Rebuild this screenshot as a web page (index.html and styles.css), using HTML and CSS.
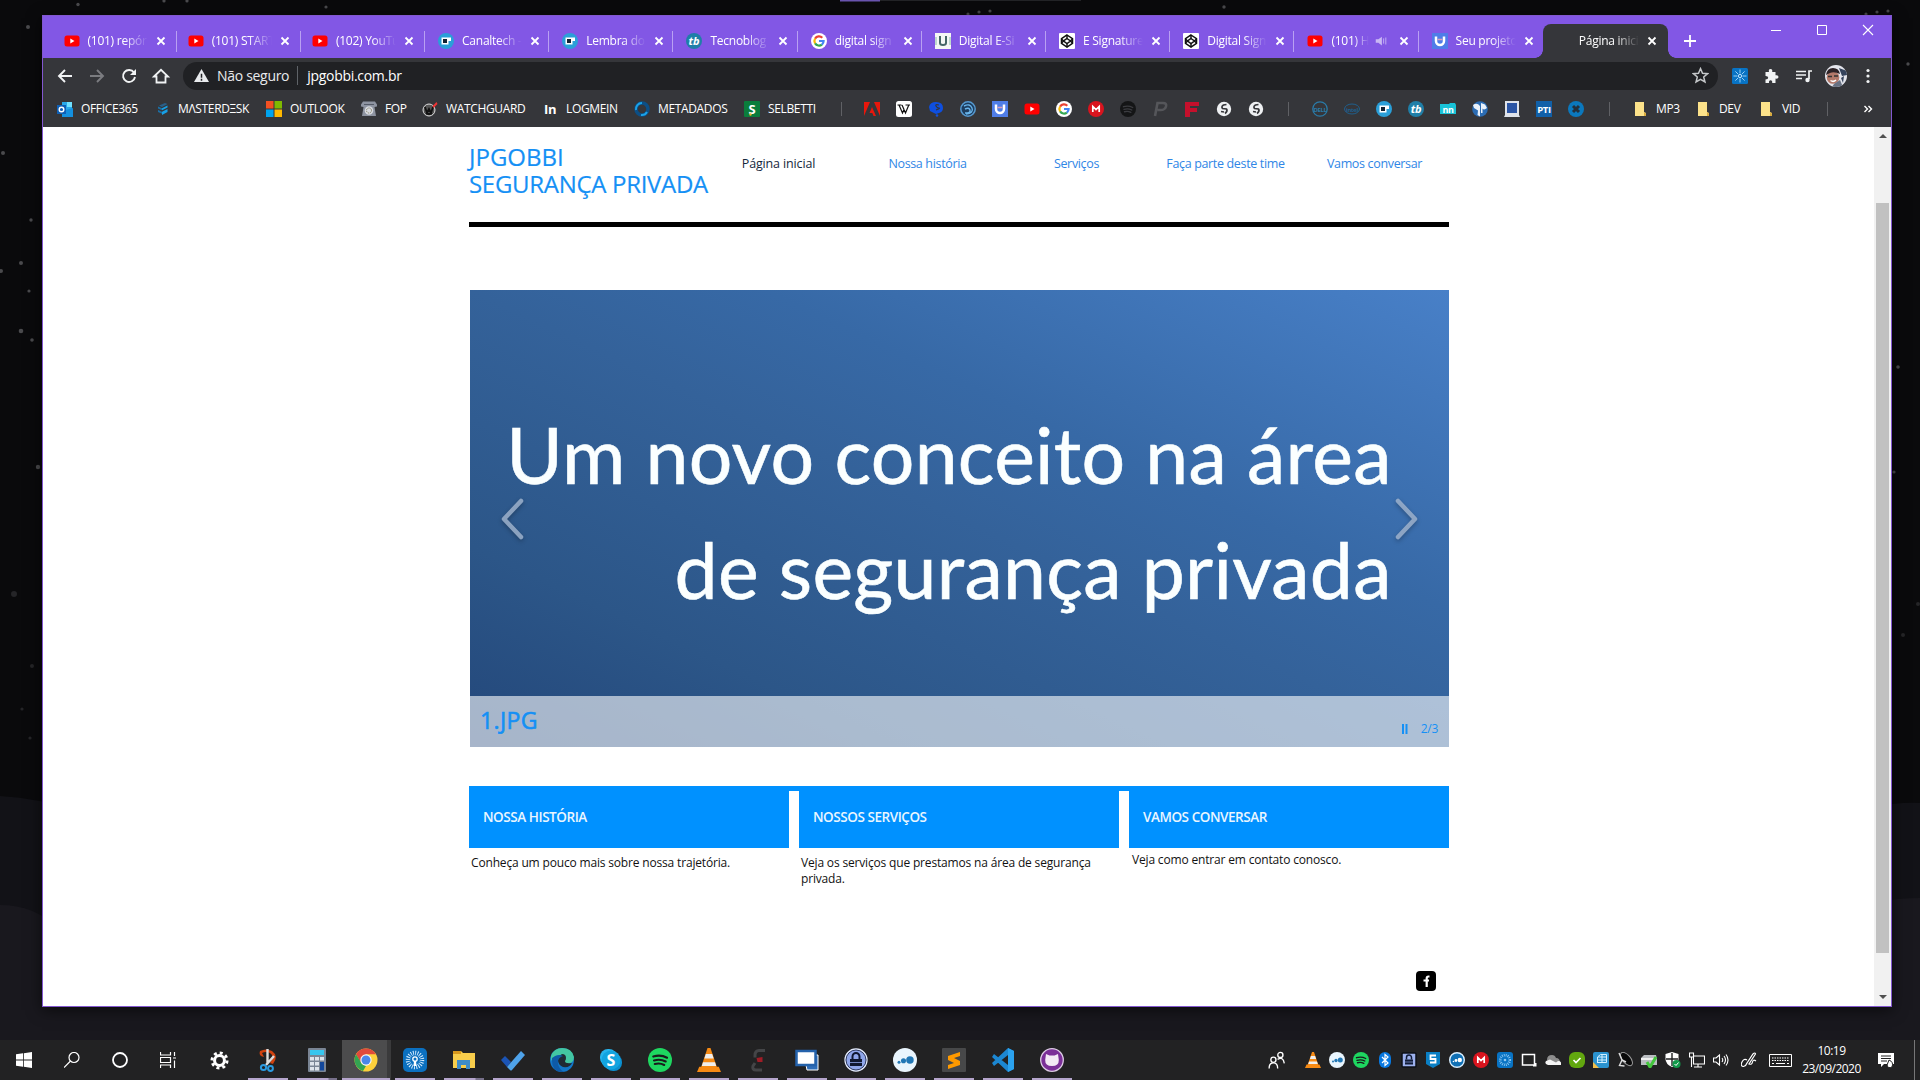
FILE: index.html
```html
<!DOCTYPE html>
<html lang="pt-BR">
<head>
<meta charset="utf-8">
<title>Página inicial</title>
<link rel="stylesheet" href="styles.css">
</head>
<body>
<svg width="0" height="0" class="defs">
  <symbol id="yt" viewBox="0 0 16 16"><rect x="0.5" y="2.5" width="15" height="11" rx="2.5" fill="#f00"/><path d="M6.3 5.5v5l4.2-2.5z" fill="#fff"/></symbol>
  <symbol id="ct" viewBox="0 0 16 16"><circle cx="8" cy="8" r="8" fill="#2a9fd8"/><path d="M3.500 4.500h9.500v3.500h-2.500v3.500h-7z" fill="#fff"/><path d="M5 6h4v4H5z" fill="#123"/></symbol>
  <symbol id="tb" viewBox="0 0 16 16"><circle cx="8" cy="8" r="8" fill="#1f7fa8"/><text x="8" y="12" text-anchor="middle" class="glyph" font-style="italic" font-size="11">tb</text></symbol>
  <symbol id="goog" viewBox="0 0 16 16"><circle cx="8" cy="8" r="8" fill="#fff"/><g fill="none" stroke-width="2.2"><path d="M11.3 4.7A4.6 4.6 0 0 0 4.1 5.6" stroke="#ea4335"/><path d="M4.1 5.6a4.6 4.6 0 0 0 0 4.8" stroke="#fbbc05"/><path d="M4.1 10.4a4.6 4.6 0 0 0 6.8 1.2" stroke="#34a853"/><path d="M10.9 11.6A4.6 4.6 0 0 0 12.6 8H8" stroke="#4285f4"/></g></symbol>
  <symbol id="ui" viewBox="0 0 16 16"><rect width="16" height="16" fill="#f4f7f4"/><path d="M5 3v7q0 2 3 2t3-2V3" fill="none" stroke="#466" stroke-width="2"/><path d="M1 4v8M15 4v8" stroke="#8ba" stroke-width="1"/></symbol>
  <symbol id="cp" viewBox="0 0 16 16"><rect width="16" height="16" rx="1" fill="#fff"/><g fill="none" stroke="#111" stroke-width="1.5"><path d="M8 2l5.5 3.7v4.6L8 14l-5.5-3.7V5.7z"/><path d="M8 5.5L11.5 8 8 10.5 4.5 8zM8 2v3.5M8 10.5V14M2.5 6l2 2-2 2M13.5 6l-2 2 2 2"/></g></symbol>
  <symbol id="uu" viewBox="0 0 16 16"><rect width="16" height="16" fill="#4f7de8"/><path d="M4 3.500v4.500a4 4 0 0 0 8 0V3.500" fill="none" stroke="#fff" stroke-width="2.500"/><path d="M5.500 6.500h5" stroke="#d9a0c0" stroke-width="1.500"/></symbol>
  <symbol id="x" viewBox="0 0 16 16"><path d="M4.500 4.500l7 7M11.500 4.500l-7 7" stroke="#fff" stroke-width="1.800"/></symbol>
  <symbol id="spot" viewBox="0 0 16 16"><circle cx="8" cy="8" r="8" fill="currentColor"/><path class="waves" d="M3.500 5.700q5-1.500 9.200.8M4 8.300q4.300-1.200 7.800.7M4.500 10.700q3.500-.9 6.300.6"/></symbol>
  <symbol id="mega" viewBox="0 0 16 16"><circle cx="8" cy="8" r="8" fill="#d9141e"/><path d="M4.800 11V5.500L8 8.600l3.200-3.100V11" fill="none" stroke="#fff" stroke-width="1.700"/></symbol>
  <symbol id="globe" viewBox="0 0 16 16"><circle cx="8" cy="8" r="7.200" fill="#eef0f2"/><path d="M10.500 3.500L7.500 4Q5 5.500 6.500 7.500l4 .5q1.500 2-1.500 4.500M5 10.500l3 .5" stroke="#35363a" stroke-width="1.700" fill="none"/></symbol>
  <symbol id="folder" viewBox="0 0 16 16"><path d="M3 1h9v10l2 1v3H3z" fill="#fce28a"/><path d="M12 11l2 1.500V15h-2z" fill="#d9ab3e"/></symbol>
  <symbol id="vlc" viewBox="0 0 16 16"><path d="M7 0h2l5 15H2z" fill="#f68a14"/><path d="M5.900 4h4.200l1 3H4.900zM4 9.500h8l.8 2.500H3.200z" fill="#eee"/><path d="M1.500 12.500h13L16 16H0z" fill="#f68a14"/></symbol>
  <symbol id="dots" viewBox="0 0 16 16"><circle cx="8" cy="8" r="8" fill="#e9f5fd"/><circle cx="4" cy="9.500" r="1" fill="#2177b5"/><circle cx="7" cy="8.500" r="1.700" fill="#2177b5"/><circle cx="11.300" cy="8" r="2.500" fill="#2177b5"/></symbol>
  <symbol id="rays" viewBox="0 0 16 16"><rect width="16" height="16" rx="1.500" fill="#0873c4"/><path d="M8 1.500v4M8 10.500v4M1.500 8h4M10.500 8h4M3.400 3.400l2.800 2.800M9.800 9.800l2.800 2.800M12.600 3.400L9.800 6.200M6.200 9.800l-2.800 2.800" stroke="#a9dbff" stroke-width=".9"/><circle cx="8" cy="8" r="1.600" fill="none" stroke="#bfe4ff"/></symbol>
</svg>

<div class="desktop">
  <svg class="wallpaper" viewBox="0 0 1920 1040">
    <path d="M0 796Q80 800 140 850V1040H0zM1780 860Q1840 800 1920 803V1040H1780z" fill="#121217"/>
    <path d="M0 905Q70 905 95 1000H1740Q1790 900 1920 898V1040H0z" fill="#19181e"/>
    <path d="M840 0h40v1.500h-40z" fill="#6a55b0"/><path d="M880 0h201v1h-201z" fill="#232427"/>
    <g fill="#4a4a4d"><circle cx="28" cy="27" r="2"/><circle cx="78" cy="4.500" r="1.700"/><circle cx="164" cy="1" r="1.600"/><circle cx="187" cy="1" r="1.600"/><circle cx="326" cy="7" r="1.600"/><circle cx="3" cy="153" r="2"/><circle cx="31" cy="220" r="1.700"/><circle cx="21" cy="263" r="2"/><circle cx="1" cy="271" r="2"/><circle cx="29" cy="291" r="1.600"/><circle cx="21" cy="331" r="2.300"/><circle cx="32" cy="340" r="1.800"/><circle cx="38" cy="467" r="2.200"/><circle cx="968" cy="14" r="1.600"/><circle cx="979" cy="12" r="1.600"/><circle cx="990" cy="11" r="1.600"/><circle cx="1224" cy="7" r="1.700"/><circle cx="1866" cy="14" r="1.600"/><circle cx="1877" cy="12" r="1.600"/><circle cx="1888" cy="11" r="1.600"/><circle cx="1908" cy="64" r="1.700"/><circle cx="1898" cy="367" r="1.800"/><circle cx="1894" cy="472" r="1.600"/></g>
    <g fill="#252528"><circle cx="14" cy="594" r="3"/><circle cx="32" cy="666" r="2"/><circle cx="22" cy="709" r="1.600"/><circle cx="30" cy="738" r="1.600"/><circle cx="1903" cy="635" r="2"/><circle cx="1918" cy="604" r="2"/></g>
  </svg>

  <div class="browser">
    <div class="tabstrip">
      <div class="tab"><svg><use href="#yt"/></svg><span>(101) repór</span><svg><use href="#x"/></svg></div>
      <div class="tab"><svg><use href="#yt"/></svg><span>(101) START</span><svg><use href="#x"/></svg></div>
      <div class="tab"><svg><use href="#yt"/></svg><span>(102) YouTu</span><svg><use href="#x"/></svg></div>
      <div class="tab"><svg><use href="#ct"/></svg><span>Canaltech -</span><svg><use href="#x"/></svg></div>
      <div class="tab"><svg><use href="#ct"/></svg><span>Lembra do</span><svg><use href="#x"/></svg></div>
      <div class="tab"><svg><use href="#tb"/></svg><span>Tecnoblog |</span><svg><use href="#x"/></svg></div>
      <div class="tab"><svg><use href="#goog"/></svg><span>digital sign</span><svg><use href="#x"/></svg></div>
      <div class="tab"><svg><use href="#ui"/></svg><span>Digital E-Si</span><svg><use href="#x"/></svg></div>
      <div class="tab"><svg><use href="#cp"/></svg><span>E Signature</span><svg><use href="#x"/></svg></div>
      <div class="tab"><svg><use href="#cp"/></svg><span>Digital Sign</span><svg><use href="#x"/></svg></div>
      <div class="tab audio"><svg><use href="#yt"/></svg><span>(101) H</span><svg class="speaker" viewBox="0 0 16 16"><path d="M2 6h3l4-3v10L5 10H2z" fill="#c9b8f3"/><path d="M11 5v6M13.500 4v8" stroke="#c9b8f3"/></svg><svg><use href="#x"/></svg></div>
      <div class="tab last"><svg><use href="#uu"/></svg><span>Seu projeto</span><svg><use href="#x"/></svg></div>
      <div class="tab active"><i></i><span>Página inici</span><svg><use href="#x"/></svg></div>
      <svg class="newtab" viewBox="0 0 16 16"><path d="M8 2v12M2 8h12" stroke="#fff" stroke-width="1.800"/></svg>
      <div class="controls">
        <svg viewBox="0 0 12 12"><path d="M1 6.500h10" stroke="#fff"/></svg>
        <svg viewBox="0 0 12 12"><path d="M1.500 1.500h9v9h-9z" fill="none" stroke="#fff"/></svg>
        <svg viewBox="0 0 12 12"><path d="M1 1l10 10M11 1L1 11" stroke="#fff" stroke-width="1.100"/></svg>
      </div>
    </div>

    <div class="toolbar">
      <svg class="tool" viewBox="0 0 16 16"><path d="M15 8H2M8 2L2 8l6 6" fill="none" stroke="#f1f3f4" stroke-width="1.900"/></svg>
      <svg class="tool" viewBox="0 0 16 16"><path d="M1 8h13M8 2l6 6-6 6" fill="none" stroke="#7b7c80" stroke-width="1.900"/></svg>
      <svg class="tool" viewBox="0 0 16 16"><path d="M13 4.500A6 6 0 1 0 14 9" fill="none" stroke="#f1f3f4" stroke-width="1.900"/><path d="M15 1v6H9z" fill="#f1f3f4"/></svg>
      <svg class="tool" viewBox="0 0 16 16"><path d="M1 8.500L8 1.800l7 6.700h-2.500v6h-9v-6z" fill="none" stroke="#f1f3f4" stroke-width="1.800"/></svg>
      <div class="omnibox">
        <svg class="warn" viewBox="0 0 16 16"><path d="M8 1l8 14H0z" fill="#e8eaed"/><path d="M8 6v4.500M8 11.500v2" stroke="#202124" stroke-width="1.600"/></svg>
        <span class="insecure">Não seguro</span>
        <span class="url">jpgobbi.com.br</span>
        <svg class="star" viewBox="0 0 16 16"><path d="M8 1.500l1.900 4.400 4.800.4-3.700 3.100 1.200 4.700L8 11.600l-4.200 2.500L5 9.400 1.300 6.300l4.800-.4z" fill="none" stroke="#c4c7c9" stroke-width="1.400"/></svg>
      </div>
      <svg class="tool" viewBox="0 0 16 16"><use href="#rays"/></svg>
      <svg class="tool" viewBox="0 0 16 16"><path d="M1.500 4H5q-.8-3 1.500-3T8.200 4h3.300v3.300q3-.6 3 1.600t-3 1.700V15H8.200q.3-2.800-1.600-2.800T5 15H1.500v-3.500q2.700 0 2.700-1.800T1.500 8z" fill="#f1f3f4"/></svg>
      <svg class="tool" viewBox="0 0 16 16"><path d="M0 3.500h10M0 7h10M0 10.500h6" stroke="#f1f3f4" stroke-width="1.700"/><path d="M16 3h-3v8" fill="none" stroke="#f1f3f4" stroke-width="1.700"/><circle cx="11.500" cy="12" r="2.200" fill="#f1f3f4"/></svg>
      <svg class="tool avatar" viewBox="0 0 22 22"><clipPath id="round"><circle cx="11" cy="11" r="11"/></clipPath><g clip-path="url(#round)"><path d="M0 0h22v22H0z" fill="#e4e5ec"/><path d="M14 3l8 3v4l-5 1zM16 13l3-2-1 7z" fill="#35435c"/><circle cx="8" cy="12.500" r="6.300" fill="#b3796a"/><path d="M1 10q1-7 7-7 6 0 7 6-6-3-10-1z" fill="#2c2226"/><path d="M3 11.500h4M9 11h4" stroke="#333" stroke-width="1.500"/><path d="M5.500 15.500q3 2 5.500-.5" stroke="#fff" stroke-width="1.500" fill="none"/><path d="M7 22l2-3 6-4 3 7z" fill="#687283"/></g></svg>
      <svg class="tool" viewBox="0 0 16 16"><g fill="#f1f3f4"><circle cx="8" cy="2.500" r="1.600"/><circle cx="8" cy="8" r="1.600"/><circle cx="8" cy="13.500" r="1.600"/></g></svg>
    </div>

    <div class="bookmarks">
      <div><svg viewBox="0 0 16 16"><path d="M5 1h10v13H5z" fill="#28a8ea"/><path d="M10 1h5v5h-5z" fill="#6fe0ff"/><path d="M5 10l11-3v9H5z" fill="#1490df"/><path d="M0 4h9v9H0z" fill="#0f5fb5"/><circle cx="4.500" cy="8.500" r="2.300" fill="none" stroke="#fff" stroke-width="1.400"/></svg><span>OFFICE365</span></div>
      <div><svg viewBox="0 0 16 16"><path d="M4 5.500l4 1.800v2L4 7.500zM4 9l4 1.800v2L4 11z" fill="#1b6fa6"/><path d="M8 7.300l5.500-2.800v2L8 9.300zM8 10.800L13.500 8v3L8 14z" fill="#17a0e6"/><path d="M5 4.500L11 2l2.500 1L8 6z" fill="#2a5f88"/></svg><span>MΛSTERDΞSK</span></div>
      <div><svg viewBox="0 0 16 16"><path d="M0 0h7.500v7.500H0z" fill="#f25022"/><path d="M8.500 0H16v7.500H8.500z" fill="#7fba00"/><path d="M0 8.500h7.500V16H0z" fill="#00a4ef"/><path d="M8.500 8.500H16V16H8.500z" fill="#ffb900"/></svg><span>OUTLOOK</span></div>
      <div><svg viewBox="0 0 16 16"><path d="M2 .5h12l2 3v2l-2.500.5L15 15H1L2.500 6 0 5.500v-2z" fill="#8e94a1"/><path d="M3 3.500h10" stroke="#555b68"/><circle cx="8" cy="9.500" r="4.300" fill="#d8dae0"/><circle cx="8" cy="9.500" r="2.500" fill="none" stroke="#775" stroke-dasharray="1 1"/></svg><span>FOP</span></div>
      <div><svg viewBox="0 0 16 16"><circle cx="7" cy="9" r="6" fill="#555" stroke="#ddd"/><path d="M3 6l2 6 2-4 2 4 2-6M4 12q3 2 6 0" stroke="#111" stroke-width="1.800" fill="none"/><path d="M10.500 5l4-4 1 2-4 4z" fill="#e33"/></svg><span>WATCHGUARD</span></div>
      <div><svg viewBox="0 0 16 16"><text x="8" y="13" text-anchor="middle" class="glyph" font-size="13">In</text></svg><span>LOGMEIN</span></div>
      <div><svg viewBox="0 0 16 16"><circle cx="8" cy="8" r="6" fill="none" stroke="#0c4f86" stroke-width="3.500"/><path d="M2 9a6 6 0 0 1 6-7M7 14a6 6 0 0 0 6-3" fill="none" stroke="#1ba3e8" stroke-width="2"/></svg><span>METADADOS</span></div>
      <div><svg viewBox="0 0 16 16"><rect width="16" height="16" rx="1" fill="#0a7d3c"/><text x="8" y="13" text-anchor="middle" class="glyph" font-size="13">S</text><circle cx="6.500" cy="13.500" r="1.200" fill="#e6b32a"/></svg><span>SELBETTI</span></div>
      <i class="sep"></i>
      <div><svg viewBox="0 0 16 16"><path d="M0 1h6L0 15zM10 1h6v14zM8 6l4 9H9.500L8.300 12H5.500z" fill="#e8170c"/></svg></div>
      <div><svg viewBox="0 0 16 16"><rect width="16" height="16" rx="2.500" fill="#fff"/><path d="M1.500 4h4M9.500 4h4.500M3 4l3.500 8L8 8.500 9.500 12 12.800 4M6 4l2 4.500" fill="none" stroke="#111" stroke-width="1.200"/></svg></div>
      <div><svg viewBox="0 0 16 16"><path d="M1 6q1-5 7-5 7 0 7 6 0 4-4 5l-3 1-6-3z" fill="#0e4fe0"/><circle cx="9" cy="14.500" r="1.300" fill="#0e4fe0"/><path d="M11 4q-4-1-3 1t3 2-3 2" stroke="#35363a" fill="none" stroke-width="1.200"/></svg></div>
      <div><svg viewBox="0 0 16 16"><circle cx="8" cy="8" r="7.200" fill="#1d3d5e" stroke="#5599d0" stroke-width="1.500"/><path d="M4 5q6-3 8 2t-6 6M5 8q4-2 5 1t-5 3" stroke="#68b4ea" fill="none" stroke-width="1.400"/></svg></div>
      <div><svg><use href="#uu"/></svg></div>
      <div><svg><use href="#yt"/></svg></div>
      <div><svg><use href="#goog"/></svg></div>
      <div><svg><use href="#mega"/></svg></div>
      <div class="ink"><svg><use href="#spot"/></svg></div>
      <div><svg viewBox="0 0 16 16"><path d="M3 15L5.500 2H11q4 0 3 3.500T8.500 9H5.500" fill="none" stroke="#55565a" stroke-width="2.600"/></svg></div>
      <div><svg viewBox="0 0 16 16"><path d="M1 1h14v4H6v2h7v4H6v5H1z" fill="#c5102c"/></svg></div>
      <div><svg><use href="#globe"/></svg></div>
      <div><svg><use href="#globe"/></svg></div>
      <i class="sep mid"></i>
      <div><svg viewBox="0 0 16 16"><circle cx="8" cy="8" r="7.200" fill="none" stroke="#2a7ba8" stroke-width="1.300"/><text x="8" y="10.500" text-anchor="middle" class="glyph teal" font-size="6">DELL</text></svg></div>
      <div><svg viewBox="0 0 16 16"><ellipse cx="8" cy="8" rx="7.500" ry="5" fill="none" stroke="#1f5f8c"/><text x="8" y="10.500" text-anchor="middle" class="glyph navy" font-size="6">intel</text></svg></div>
      <div><svg><use href="#ct"/></svg></div>
      <div><svg><use href="#tb"/></svg></div>
      <div><svg viewBox="0 0 16 16"><path d="M0 3h9l1-1h5l1 2v9H0z" fill="#18c3d8"/><text x="8" y="11.500" text-anchor="middle" class="glyph" font-size="9">nn</text></svg></div>
      <div><svg viewBox="0 0 16 16"><circle cx="8" cy="8" r="7.800" fill="#2b6cb3"/><path d="M1 4q4-3 7 1v10.500L5.500 14 6 9.500 2 7zM9 2l4 1.500L15 7q-3 2.500-4.500.5V12H9z" fill="#eaf2fb"/></svg></div>
      <div><svg viewBox="0 0 16 16"><path d="M1 0h14v14l1 2H0l1-2z" fill="#dfe3ea"/><path d="M3 2h10v10H3z" fill="#2b55a5"/></svg></div>
      <div><svg viewBox="0 0 16 16"><rect width="16" height="16" fill="#1160a8"/><text x="8" y="12" text-anchor="middle" class="glyph" font-size="9.500">PTI</text></svg></div>
      <div><svg viewBox="0 0 16 16"><circle cx="8" cy="8" r="8" fill="#0b78bd"/><path d="M5 5l6 6M11 5l-6 6" stroke="#23303c" stroke-width="3"/></svg></div>
      <i class="sep end"></i>
      <div><svg><use href="#folder"/></svg><span>MP3</span></div>
      <div><svg><use href="#folder"/></svg><span>DEV</span></div>
      <div><svg><use href="#folder"/></svg><span>VID</span></div>
      <i class="sep"></i>
      <div class="more"><svg viewBox="0 0 16 16"><path d="M4.500 5l3 3-3 3M8.500 5l3 3-3 3" fill="none" stroke="#fff" stroke-width="1.400"/></svg></div>
    </div>

    <div class="viewport">
      <main class="page">
        <header>
          <h1>JPGOBBI<br><span>SEGURANÇA PRIVADA</span></h1>
          <nav>
            <a class="current">Página inicial</a>
            <a>Nossa história</a>
            <a>Serviços</a>
            <a>Faça parte deste time</a>
            <a>Vamos conversar</a>
          </nav>
        </header>
        <section class="slider">
          <div class="slide">
            <svg class="arrow" viewBox="0 0 24 42"><path d="M21 3L4 21l17 18"/></svg>
            <p>Um novo conceito na área<br>de segurança privada</p>
            <svg class="arrow" viewBox="0 0 24 42"><path d="M3 3l17 18L3 39"/></svg>
          </div>
          <div class="caption"><b>1.JPG</b><svg viewBox="0 0 6 10"><path d="M1 0v10M4.500 0v10" stroke="#1590f5" stroke-width="2"/></svg><span>2/3</span></div>
        </section>
        <section class="cards">
          <article><h2>NOSSA HISTÓRIA</h2><p>Conheça um pouco mais sobre nossa trajetória.</p></article>
          <article><h2>NOSSOS SERVIÇOS</h2><p>Veja os serviços que prestamos na área de segurança<br>privada.</p></article>
          <article><h2>VAMOS CONVERSAR</h2><p class="raised">Veja como entrar em contato conosco.</p></article>
        </section>
        <footer><svg viewBox="0 0 20 20"><rect width="20" height="20" rx="4" fill="#000"/><path d="M13.500 5.500h-1q-1.800 0-1.800 1.900V16M7.500 9.500h5.500" fill="none" stroke="#fff" stroke-width="2.200"/></svg></footer>
      </main>
      <div class="scrollbar">
        <svg viewBox="0 0 8 4"><path d="M0 4l4-4 4 4z"/></svg>
        <div class="thumb"></div>
        <svg viewBox="0 0 8 4"><path d="M0 0l4 4 4-4z"/></svg>
      </div>
    </div>
  </div>
</div>

<div class="taskbar">
  <div class="start">
    <div><svg class="s16" viewBox="0 0 16 16"><path d="M0 2.300L7 1.300V7.600H0zM7.800 1.200L16 0v7.600H7.800zM0 8.400h7v6.300l-7-1zM7.800 8.400H16V16l-8.200-1.200z" fill="#fff"/></svg></div>
    <div><svg class="s16" viewBox="0 0 16 16"><circle cx="10" cy="5.500" r="5" fill="none" stroke="#fff" stroke-width="1.200"/><path d="M6.500 9L0 15.500" stroke="#fff" stroke-width="1.200"/></svg></div>
    <div><svg class="s16" viewBox="0 0 16 16"><circle cx="8" cy="8" r="7" fill="none" stroke="#fff" stroke-width="1.800"/></svg></div>
    <div><svg class="s16" viewBox="0 0 16 16"><path d="M.5 0v3h10V0M.5 16v-3h10v3M.5 5.500h10v5H.5zM14.500 0v4M14.500 8.500V16M13 6h3" fill="none" stroke="#fff" stroke-width="1.200"/></svg></div>
  </div>
  <div class="apps">
    <div><svg viewBox="0 0 20 20"><circle cx="10" cy="10" r="5.200" fill="none" stroke="#fff" stroke-width="3.200"/><circle cx="10" cy="10" r="8" fill="none" stroke="#fff" stroke-width="3" stroke-dasharray="3.140 3.140"/></svg></div>
    <div class="run"><svg viewBox="0 0 24 24"><path d="M8 9Q2 8 4 3q6-3 12 0 7 5 1 13l-3-1q5-7 0-10-4-2-8 0z" fill="#d1420f"/><path d="M11.500 1v15M18 8l-8 9" stroke="#ddd" stroke-width="2.400"/><circle cx="7.500" cy="19.500" r="2.600" fill="none" stroke="#2b9be0" stroke-width="2"/><circle cx="14.500" cy="20.500" r="2.400" fill="none" stroke="#2b9be0" stroke-width="2"/></svg></div>
    <div class="run multi"><svg viewBox="0 0 24 24"><rect x="3" width="18" height="24" rx="1" fill="#7a8594"/><path d="M5 2h14v5H5z" fill="#37c6ee"/><path d="M5 9h4v3.500H5zM10 9h4v3.500h-4zM5 14h4v3.500H5zM10 14h4v3.500h-4zM5 19h4v3.500H5zM10 19h4v3.500h-4zM15 9h4v3.500h-4z" fill="#dde3ea"/><path d="M15 14h4v8.500h-4z" fill="#13489c"/></svg></div>
    <div class="run focus"><svg viewBox="0 0 24 24"><circle cx="12" cy="12" r="11.500" fill="#fdd03b"/><path d="M2 6.300A11.500 11.500 0 0 1 22 6.300H12L7 15z" fill="#e04a3b"/><path d="M2 6.300L8 16l4 2-3 5A11.500 11.500 0 0 1 2 6.300z" fill="#33a452"/><circle cx="12" cy="12" r="5.700" fill="#f4f6f8"/><circle cx="12" cy="12" r="4.500" fill="#4a86ea"/></svg></div>
    <div class="run"><svg viewBox="0 0 24 24"><rect width="24" height="24" rx="5" fill="#0b70bf"/><circle cx="12" cy="12" r="7" fill="none" stroke="#d5ecff" stroke-width="4.500" stroke-dasharray=".9 1.300"/><circle cx="12" cy="11" r="2.200" fill="none" stroke="#fff" stroke-width="1.300"/><path d="M11 13l-.5 5h3l-.5-5" fill="#fff"/></svg></div>
    <div class="run multi"><svg viewBox="0 0 24 24"><path d="M1 3h8l2 2h12v15H1z" fill="#f8cd4b"/><path d="M1 3h8v3H1z" fill="#d8981d"/><path d="M5 12h13v9h-4v-4H9v4H5z" fill="#3f8cc9"/></svg></div>
    <div class="run"><svg viewBox="0 0 24 24"><path d="M0 12l4-4 6 6-4 5z" fill="#1b54b5"/><path d="M6 19L20 3l4 4-13 15q-1 1-2 0z" fill="#4fa3ea"/></svg></div>
    <div class="run"><svg viewBox="0 0 24 24"><circle cx="12" cy="12" r="12" fill="#1377c9"/><path d="M1 8Q4 0 12 0q10 0 12 9 0 7-8 7-4 0-3-4 1-4-3-5-6 0-9 6z" fill="#43c6a2"/><path d="M12 6q4 0 4 4 0 2-1 3 0 3 7 2-2 5-9 4-5-2-5-7 0-4 4-6z" fill="#202b35"/><path d="M2 10q6-5 11-2-6 2-5 8 1 5 6 8Q1 25 2 10z" fill="#0e5aa7"/></svg></div>
    <div class="run"><svg viewBox="0 0 24 24"><rect x="1" y="1" width="17" height="17" rx="8" fill="#27b4ec"/><rect x="6" y="6" width="17" height="17" rx="8" fill="#0b8fd0"/><circle cx="12" cy="12" r="9.500" fill="#13a4e0"/><text x="12" y="18" text-anchor="middle" class="glyph" font-size="16">S</text></svg></div>
    <div class="run green"><svg><use href="#spot"/></svg></div>
    <div class="run"><svg><use href="#vlc"/></svg></div>
    <div class="run"><svg viewBox="0 0 24 24"><path d="M19 2.500h-6q-4 0-4 5v2M9 15l-2 3q-1 4 3 4h6" fill="none" stroke="#444547" stroke-width="3"/><path d="M10.500 10l6-1v5h-5z" fill="#a01c26"/></svg></div>
    <div class="run"><svg viewBox="0 0 24 24"><path d="M9 7h14v15H12z" fill="#2f6eb8" stroke="#fff"/><path d="M1.500 3h19v14h-19z" fill="#fff" stroke="#2462ab" stroke-width="2.500"/></svg></div>
    <div class="run"><svg viewBox="0 0 24 24"><circle cx="12" cy="12" r="11" fill="#8fa6ea" stroke="#e4ebfc" stroke-width="1.300"/><circle cx="12" cy="12" r="10" fill="none" stroke="#16203c" stroke-width=".8"/><path d="M6 11h12v7H6z" fill="#101830"/><path d="M8.500 11V8.500a3.500 3.500 0 0 1 7 0V11" fill="none" stroke="#101830" stroke-width="2"/><path d="M6 14.500h12" stroke="#8fa6ea" stroke-width=".8"/></svg></div>
    <div class="run"><svg><use href="#dots"/></svg></div>
    <div class="run"><svg viewBox="0 0 24 24"><rect width="24" height="24" rx="1" fill="#474849"/><path d="M18 4v4l-6 2 6 3v4L6 21v-4l6-2-6-3V8z" fill="#ff9a00"/></svg></div>
    <div class="run"><svg viewBox="0 0 24 24"><path d="M17 0l6 3v18l-6 3L1 9l2-3 14 11V7L3 18l-2-3z" fill="#1c87d2"/><path d="M17 0l6 3v18l-6 3z" fill="#2ba2ee"/></svg></div>
    <div class="run"><svg viewBox="0 0 24 24"><circle cx="12" cy="12" r="11.300" fill="#7b2f98" stroke="#dccbe4" stroke-width="1.300"/><path d="M6 6l3.500 1.500h5L18 6l.8 6q.2 6-6.800 6t-6.800-6z" fill="#f3e9f5"/></svg></div>
  </div>
  <div class="tray">
    <div class="people"><svg viewBox="0 0 16 16"><g fill="none" stroke="#fff" stroke-width="1.200"><circle cx="11" cy="3.500" r="2.300"/><circle cx="4.800" cy="7.800" r="2.300"/><path d="M1 15.500q0-5 3.800-5t3.800 5M8.500 7.500q5-3 6 3.500"/></g></svg></div>
    <div><svg><use href="#vlc"/></svg></div>
    <div><svg><use href="#dots"/></svg></div>
    <div class="green"><svg><use href="#spot"/></svg></div>
    <div><svg viewBox="0 0 16 16"><rect x="2" width="12" height="16" rx="6" fill="#0878e0"/><path d="M5 5l6 6-3 2.500v-11L11 5l-6 6" fill="none" stroke="#fff" stroke-width="1.200"/></svg></div>
    <div><svg viewBox="0 0 16 16"><rect x="1" y="1" width="14" height="14" rx="1" fill="#9db1ee" stroke="#0c1018" stroke-width="1.500"/><path d="M4 7.500h8v5H4z" fill="#111c38"/><path d="M5.500 7.500v-2a2.500 2.500 0 0 1 5 0v2" fill="none" stroke="#111c38" stroke-width="1.500"/><path d="M4 10h8" stroke="#9db1ee" stroke-width=".6"/></svg></div>
    <div><svg viewBox="0 0 16 16"><path d="M1 0h14v12l-7 4-7-4z" fill="#0a7fc4"/><path d="M11 3.500H5.500v3.500h5v3.500H5" fill="none" stroke="#fff" stroke-width="1.800"/></svg></div>
    <div><svg viewBox="0 0 16 16"><circle cx="8" cy="8" r="7.300" fill="#0f70b5" stroke="#d9efff" stroke-width="1.400"/><g fill="#fff"><circle cx="4.500" cy="9.500" r=".8"/><circle cx="7" cy="8.500" r="1.400"/><circle cx="10.800" cy="8" r="2.200"/></g></svg></div>
    <div><svg><use href="#mega"/></svg></div>
    <div><svg viewBox="0 0 16 16"><rect width="16" height="16" rx="3" fill="#0873c4"/><circle cx="8" cy="8" r="4.800" fill="none" stroke="#8fc9f2" stroke-width="2.600" stroke-dasharray=".8 1.100"/><circle cx="8" cy="8" r="1.300" fill="#8fc9f2"/></svg></div>
    <div><svg viewBox="0 0 16 16"><path d="M12 11h3.500v3.500H12z" fill="#fff"/><path d="M1.500 2.500h12v10.500h-12z" fill="#222" stroke="#fff" stroke-width="1.500"/></svg></div>
    <div><svg viewBox="0 0 16 16"><path d="M2 8q0-5 5-5 3 0 4 3 4 0 4 5H4z" fill="#8c8c8c"/><path d="M3 13q-4-1-2-4l4-1.500 6 3 2-1.500q4 0 3 4z" fill="#f4f4f4"/></svg></div>
    <div><svg viewBox="0 0 16 16"><rect width="16" height="16" rx="6" fill="#62a70f"/><path d="M4.500 8l2.500 2.500 4.500-4.500" fill="none" stroke="#fff" stroke-width="1.700"/></svg></div>
    <div><svg viewBox="0 0 16 16"><rect width="16" height="16" rx="2" fill="#2b93cf"/><path d="M0 10l6 6H0z" fill="#f3c04a"/><path d="M4.500 11V5l3-2.500h6v8h-9M5 5h8M5 8h8M9 3v7" fill="none" stroke="#d3f0ff"/></svg></div>
    <div><svg viewBox="0 0 16 16"><ellipse cx="9.500" cy="7" rx="4" ry="8" transform="rotate(-40 9.500 7)" fill="#0a0a0a" stroke="#999"/><path d="M2 1l3 7-2.500 5.500 5 .5M5 8l4 2" fill="none" stroke="#ddd" stroke-width="1.400"/></svg></div>
    <div><svg viewBox="0 0 16 16"><path d="M0 6l3-3h12l1 4v6H0z" fill="#b9bcc0"/><path d="M0 6h14v2H0z" fill="#eee"/><path d="M6 10l3 5 6-10" fill="none" stroke="#42c63b" stroke-width="3"/></svg></div>
    <div><svg viewBox="0 0 16 16"><path d="M7 0l6.500 2v5q0 5-6.500 8Q.5 12 .5 7V2z" fill="#fff"/><path d="M7 1v13M1 7h12" stroke="#222" stroke-width="1.400"/><circle cx="11.500" cy="12" r="4" fill="#119a4a"/><path d="M9.500 12l1.500 1.500 2.500-3" stroke="#fff" fill="none"/></svg></div>
    <div><svg viewBox="0 0 16 16"><path d="M4.500 4H15.500v8h-11zM9 12v3M5 15h8M.5 1h4v4h-4zM2.500 5v10" fill="none" stroke="#fff" stroke-width="1.100"/></svg></div>
    <div><svg viewBox="0 0 16 16"><path d="M.5 6H3l3.500-3v10L3 10H.5zM9 6q1.500 2 0 4M11 4q3 4 0 8M13 2.500q4 5.500 0 11" fill="none" stroke="#fff" stroke-width="1.100"/></svg></div>
    <div class="pen"><svg viewBox="0 0 16 16"><path d="M6 8Q3 6 1 10t1.500 4.500Q5 14 6 11L12 2q2-2 2.500 0L8 12q3 1 3.500-2t3.500-1" fill="none" stroke="#fff" stroke-width="1.200"/></svg></div>
    <div class="keyboard"><svg viewBox="0 0 23 13"><path d="M.5.5h22v12H.5z" fill="none" stroke="#fff"/><path d="M3 4h17M3 6.500h17" stroke="#fff" stroke-width="1.200" stroke-dasharray="1.500 1"/><path d="M3 9.500h2M7 9.500h9M18 9.500h2" stroke="#fff"/></svg></div>
    <div class="clock"><span>10:19</span><span>23/09/2020</span></div>
    <div class="notif"><svg viewBox="0 0 17 17"><path d="M0 1h16v11H6l-3 3v-3H0z" fill="#fff"/><path d="M3 4h10M3 6.500h10M3 9h6" stroke="#222"/><path d="M11 8q5 2 3 7-4 2-5-2z" fill="#fff" stroke="#222"/></svg></div>
  </div>
</div>
</body>
</html>
```
FILE: styles.css
```css
* { box-sizing: border-box; margin: 0; padding: 0; }
body { width: 1920px; height: 1080px; overflow: hidden; display: flex; flex-direction: column; background: #0a0a0c; font-family: "Open Sans", "Noto Sans", sans-serif; font-size: 12px; }
svg { display: block; flex: none; }
i { display: block; }
.defs { position: absolute; }
.glyph { fill: #fff; font-family: "Open Sans", sans-serif; font-weight: 700; }
.teal { fill: #2a7ba8; }
.navy { fill: #1f5f8c; }
.waves { fill: none; stroke: var(--waves, #191b1c); stroke-width: 1.4px; stroke-linecap: round; }

.desktop { position: relative; height: 1040px; padding: 15px 28px 0 42px; }
.wallpaper { position: absolute; inset: 0; width: 1920px; height: 1040px; }

.browser { position: relative; width: 1850px; height: 992px; display: flex; flex-direction: column; border: 1px solid #8257cf; background: #35363a; box-shadow: 0 3px 14px rgba(0, 0, 0, .6); }

.tabstrip { height: 42px; display: flex; align-items: flex-end; padding-left: 9.5px; background: #8257e5; color: #fff; }
.tab { position: relative; width: 124.2px; height: 34px; display: flex; align-items: center; padding: 0 0 1px 11px; }
.tab:nth-child(n+4) { padding-left: 13px; }
.tab::after { content: ""; position: absolute; right: 0; top: 7px; width: 1px; height: 21px; background: #b9a0f2; }
.tab.last::after, .tab.active::after { display: none; }
.tab svg, .tab i { width: 16px; height: 16px; }
.tab span { width: 60px; margin: 0 5px 0 8px; overflow: hidden; white-space: nowrap; letter-spacing: -.25px; -webkit-mask-image: linear-gradient(90deg, #000 60%, transparent); mask-image: linear-gradient(90deg, #000 60%, transparent); }
.tab.audio span { width: 38px; }
.tab.audio .speaker { width: 14px; margin-right: 8px; }
.tab.active { width: 125px; padding-left: 12px; background: #35363a; border-radius: 8px 8px 0 0; }
.tab.active::before { content: ""; position: absolute; left: -8px; right: -8px; bottom: 0; height: 8px; background: radial-gradient(circle at 0 0, transparent 7.5px, #35363a 8px) left / 8px 8px no-repeat, radial-gradient(circle at 100% 0, transparent 7.5px, #35363a 8px) right / 8px 8px no-repeat; }
.newtab { width: 16px; height: 16px; margin: 0 0 9px 14px; }
.controls { display: flex; align-self: flex-start; margin: 8px 17px 0 auto; gap: 34px; }
.controls svg { width: 12px; height: 12px; }

.toolbar { height: 36px; display: flex; align-items: center; padding: 0 7px 0 6px; }
.tool { width: 32px; height: 16px; }
.tool.avatar { height: 22px; }
.omnibox { width: 1536px; height: 28px; margin: 0 6px; padding: 0 9px 1px 11px; display: flex; align-items: center; border-radius: 14px; background: #202124; color: #e8eaed; font-size: 14px; letter-spacing: -.3px; }
.warn { width: 15px; height: 15px; margin-right: 8px; }
.insecure { padding-right: 8px; border-right: 1px solid #5f6368; line-height: 19px; }
.url { padding-left: 9px; color: #fff; }
.star { width: 17px; height: 17px; margin-left: auto; }

.bookmarks { height: 33px; padding: 0 0 4px 14px; display: grid; grid-template-columns: 97px 112px 95px 61px 120px 92px 110px 89px 31px repeat(13, 32px) 32px repeat(9, 32px) 32px 63px 63px 61px 16px 66px; align-items: center; color: #fff; letter-spacing: -.35px; }
.bookmarks div { display: flex; align-items: center; gap: 8px; white-space: nowrap; }
.bookmarks svg { width: 16px; height: 16px; }
.bookmarks span { padding-bottom: 1px; }
.bookmarks .ink { color: #141516; --waves: #3b3c40; }
.sep { width: 1px; height: 14px; margin-left: 8px; background: #606165; }
.sep.end { margin-left: 9px; }
.bookmarks .more { justify-content: center; }

.viewport { flex: 1; display: flex; background: #fff; }
.page { width: 980px; margin-left: 426px; color: #111; }
.page header { height: 100px; display: flex; border-bottom: 5px solid #000; }
h1 { width: 235px; padding-top: 16px; font-size: 24px; line-height: 27px; font-weight: 400; color: #1590f5; white-space: nowrap; -webkit-text-stroke: .2px #1590f5; }
h1 span { letter-spacing: -.3px; }
nav { display: grid; grid-template-columns: repeat(5, 149px); justify-items: center; padding-top: 28px; font-size: 12.5px; letter-spacing: -.34px; line-height: 18px; color: #2f86e6; white-space: nowrap; }
nav .current { color: #15283c; letter-spacing: -.15px; }

.slider { margin: 63px 0 0 1px; width: 979px; height: 457px; display: flex; flex-direction: column; background: linear-gradient(to top right, #23477a 0, #2c5688 22%, #34629a 50%, #3769a6 65%, #4880c8 100%); }
.slide { height: 406px; display: flex; align-items: center; justify-content: space-between; padding: 52px 30px 0; }
.slide p { margin: -14px 2px 0 -19px; text-align: right; color: #fbffff; font-family: Lato, sans-serif; font-size: 77px; letter-spacing: .25px; line-height: 115px; white-space: nowrap; -webkit-text-stroke: .6px #fbffff; }
.arrow { width: 24px; height: 42px; filter: drop-shadow(0 2px 2px rgba(0, 0, 0, .3)); }
.arrow path { fill: none; stroke: #9eb2cc; stroke-width: 4.5px; stroke-linecap: round; stroke-linejoin: round; opacity: .85; }
.caption { flex: 1; display: flex; align-items: center; padding: 0 11px 0 10px; background: rgba(255, 255, 255, .6); color: #1590f5; font-size: 12px; letter-spacing: -.3px; }
.caption b { margin-bottom: 3px; font-size: 23px; font-weight: 500; letter-spacing: .4px; -webkit-text-stroke: .6px #1590f5; }
.caption svg { width: 6px; height: 10px; margin: 14px 13px 0 auto; }
.caption span { margin-top: 14px; }

.cards { margin-top: 39px; display: flex; gap: 10px; border-top: 5px solid #0091ff; }
.cards article { width: 320px; }
h2 { height: 57px; padding: 3px 0 0 14px; line-height: 46px; font-size: 13.5px; letter-spacing: -.45px; font-weight: 600; color: #eaf6ff; background: #0091ff; white-space: nowrap; }
.cards p { padding: 7px 0 0 2px; font-size: 12px; letter-spacing: -.17px; line-height: 16px; white-space: nowrap; }
.cards p.raised { padding: 4px 0 0 3px; }
footer { padding: 84px 0 0 947px; }
footer svg { width: 20px; height: 20px; }

.scrollbar { width: 17px; margin-left: auto; display: flex; flex-direction: column; align-items: center; background: #f1f1f1; fill: #505050; padding: 7px 0; }
.scrollbar svg { width: 8px; height: 4px; }
.thumb { width: 13px; height: 750px; margin: 65px 0 auto; background: #c1c1c1; }

.taskbar { height: 40px; display: flex; background: #222223; color: #fff; }
.taskbar div { display: flex; align-items: center; justify-content: center; }
.start > div { width: 48px; height: 40px; }
.s16 { width: 16px; height: 16px; }
.taskbar .apps { margin-left: 2.5px; width: 882px; justify-content: flex-start; }
.apps > div { width: 49px; height: 40px; position: relative; }
.apps svg { width: 24px; height: 24px; }
.apps > div:first-child svg { width: 19px; height: 19px; }
.apps .run::after { content: ""; position: absolute; left: 4.5px; bottom: 0; width: 40px; height: 2px; background: #b5a5cc; }
.apps .multi::after { background: linear-gradient(90deg, #b5a5cc 31px, #77708a 32px); }
.apps .focus { background: linear-gradient(90deg, #4c4c4d 45px, #3a3a3b 45px); }
.apps .focus::after { left: 0; width: 48px; }
.green { color: #1ed760; }
.taskbar .tray { margin-left: auto; justify-content: flex-start; width: 655px; }
.tray > div { width: 24px; height: 40px; }
.tray svg { width: 16px; height: 16px; }
.tray .people { margin-right: 12px; }
.tray .people svg { width: 18px; height: 18px; }
.tray .pen { width: 32px; }
.tray .keyboard { width: 31px; }
.tray .keyboard svg { width: 23px; height: 13px; }
.tray .clock { width: 71px; flex-direction: column; line-height: 18px; font-size: 12px; letter-spacing: -.5px; }
.tray .notif { width: 48px; padding-right: 9px; border-right: 1px solid #777; }
.tray .notif svg { width: 17px; height: 17px; }
```
